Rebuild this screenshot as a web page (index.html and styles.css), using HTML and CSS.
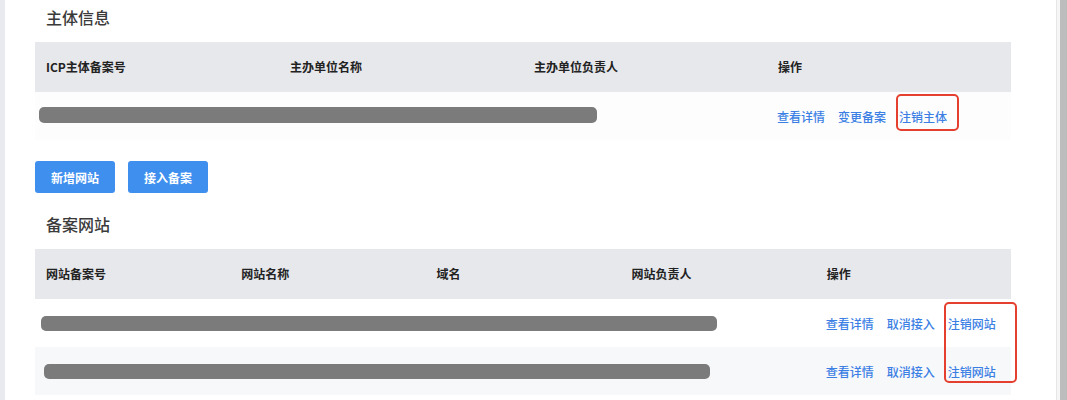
FILE: index.html
```html
<!DOCTYPE html>
<html lang="zh-CN">
<head>
<meta charset="utf-8">
<title>备案管理</title>
<link rel="stylesheet" href="styles.css">
</head>
<body>
<div class="page">
  <div class="side-strip"></div>
  <main class="content">
    <h2 class="section-title">主体信息</h2>
    <div class="table">
      <div class="thead cols-4">
        <div class="th">ICP主体备案号</div>
        <div class="th">主办单位名称</div>
        <div class="th">主办单位负责人</div>
        <div class="th">操作</div>
      </div>
      <div class="tr tr-light">
        <div class="redact-area redact-a"><span class="redact" style="width:558px;height:16px;margin-top:-3px"></span></div>
        <div class="actions actions-4">
          <a class="link">查看详情</a>
          <a class="link">变更备案</a>
          <a class="link marked">注销主体<span class="mark mark-one"></span></a>
        </div>
      </div>
    </div>

    <div class="btn-row">
      <button class="btn">新增网站</button>
      <button class="btn">接入备案</button>
    </div>

    <h2 class="section-title">备案网站</h2>
    <div class="table table-sites">
      <div class="thead cols-5">
        <div class="th">网站备案号</div>
        <div class="th">网站名称</div>
        <div class="th">域名</div>
        <div class="th">网站负责人</div>
        <div class="th">操作</div>
      </div>
      <div class="tr">
        <div class="redact-area redact-b"><span class="redact" style="width:676px;height:15px"></span></div>
        <div class="actions actions-5">
          <a class="link">查看详情</a>
          <a class="link">取消接入</a>
          <a class="link">注销网站</a>
        </div>
      </div>
      <div class="tr tr-stripe">
        <div class="redact-area redact-c"><span class="redact" style="width:666px;height:15px"></span></div>
        <div class="actions actions-5">
          <a class="link">查看详情</a>
          <a class="link">取消接入</a>
          <a class="link">注销网站</a>
        </div>
      </div>
      <span class="mark mark-two"></span>
    </div>
  </main>
  <div class="scroll-gutter">
    <div class="scroll-thumb"></div>
  </div>
</div>
</body>
</html>
```
FILE: styles.css
```css
* { box-sizing: border-box; }
html, body { margin: 0; padding: 0; }
body {
  background: #ffffff;
  font-family: "Noto Sans CJK SC", "Noto Sans", "Liberation Sans", sans-serif;
  color: #333;
  width: 1067px;
  height: 400px;
  overflow: hidden;
}
.page {
  display: flex;
  height: 400px;
}
.side-strip {
  width: 5px;
  flex: none;
  background: #e9eaef;
}
.content {
  flex: 1;
  padding: 5px 0 0 30px;
}
.section-title {
  margin: 0 0 13px 11px;
  font-size: 16px;
  line-height: 24px;
  font-weight: 500;
  color: #3a3a3a;
}
.table {
  width: 976px;
  position: relative;
}
.thead {
  display: grid;
  height: 50px;
  background: #e7e8ec;
  align-items: center;
}
.cols-4 { grid-template-columns: repeat(4, 1fr); }
.cols-5 { grid-template-columns: repeat(5, 1fr); }
.th {
  padding-left: 11px;
  font-size: 12px;
  font-weight: 700;
  color: #222;
  line-height: 16px;
}
.tr {
  display: flex;
  align-items: center;
  height: 48px;
  background: #ffffff;
}
.tr-light { background: #fdfdfd; }
.tr-stripe { background: #f7f8fa; }
.redact-area {
  flex: 1;
  display: flex;
  align-items: center;
}
.redact-a { padding-left: 4px; }
.redact-b { padding-left: 6px; }
.redact-c { padding-left: 9px; }
.redact {
  display: block;
  background: #7b7b7b;
  border-radius: 5px;
}
.actions {
  display: flex;
  gap: 13px;
  padding-left: 10px;
  padding-top: 2px;
}
.actions-4 { width: 244px; }
.actions-5 { width: 195.2px; }
.link {
  font-size: 12px;
  line-height: 16px;
  font-weight: 500;
  color: #3b7fe4;
  cursor: pointer;
  white-space: nowrap;
}
.marked { position: relative; }
.mark {
  position: absolute;
  border: 2px solid #e5402f;
  border-radius: 5px;
  pointer-events: none;
}
.mark-one {
  left: -3px;
  right: -12px;
  top: -15px;
  bottom: -6px;
}
.mark-two {
  left: 909px;
  top: 53px;
  width: 73px;
  height: 81px;
}
.btn-row {
  display: flex;
  gap: 13px;
  margin: 21px 0 19px;
}
.btn {
  width: 80px;
  height: 32px;
  border: none;
  border-radius: 3px;
  background: #3f8fee;
  color: #fff;
  font-family: inherit;
  font-size: 12px;
  font-weight: 700;
  padding: 0;
}
.scroll-gutter {
  width: 11px;
  flex: none;
  display: flex;
  border-left: 1px solid #e6e6e6;
  background: #f6f6f6;
  padding-left: 3px;
}
.scroll-thumb {
  flex: 1;
  background: #bdbdbd;
}
```
